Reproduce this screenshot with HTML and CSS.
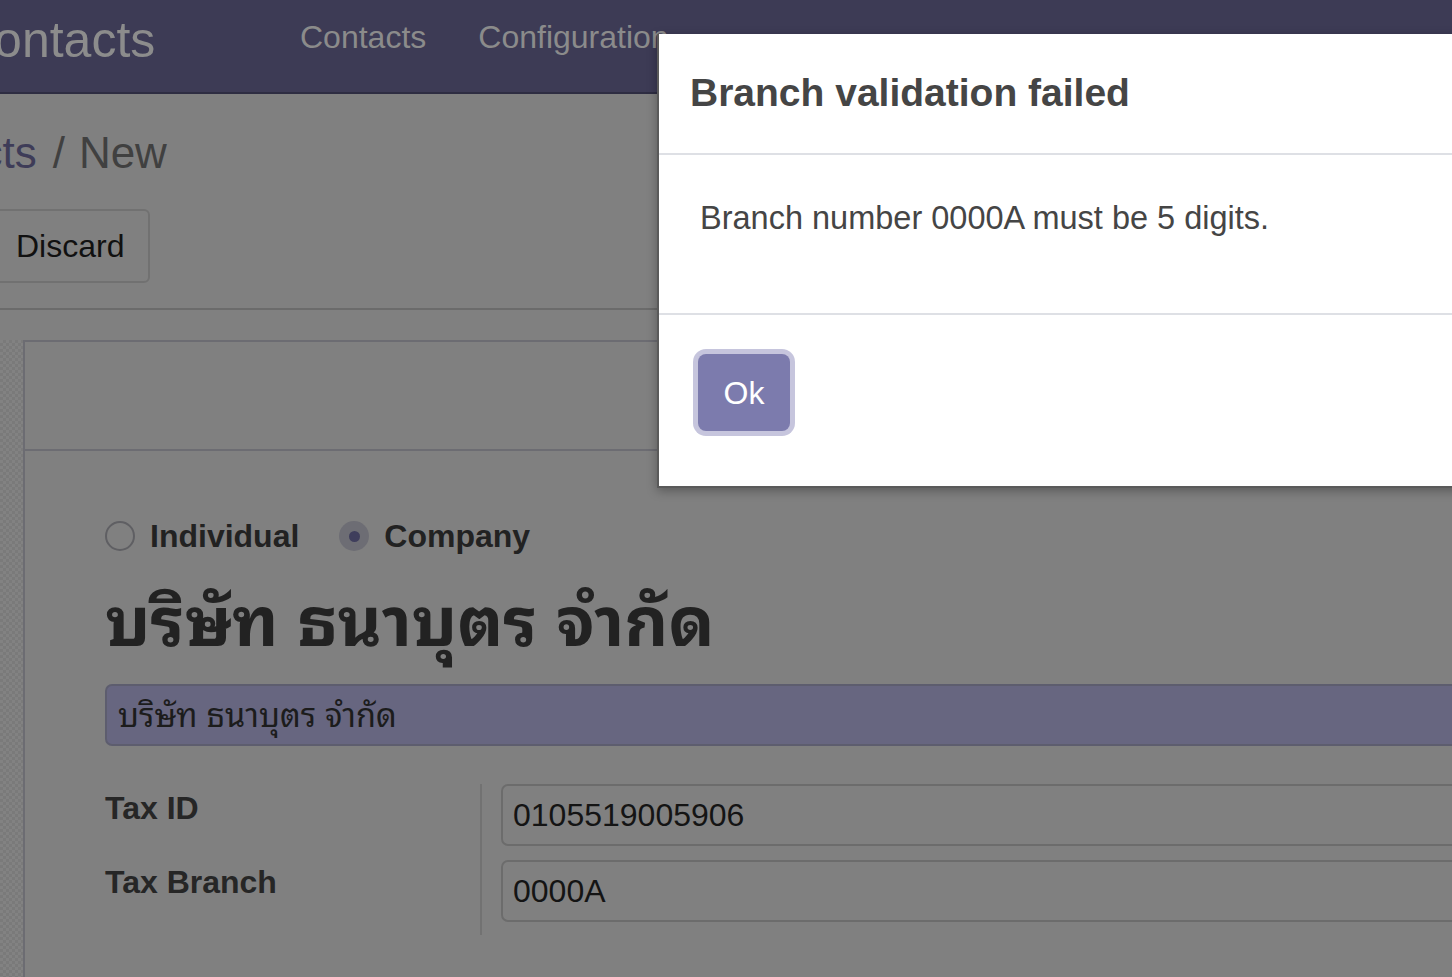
FILE: index.html
```html
<!DOCTYPE html>
<html lang="en">
<head>
<meta charset="utf-8">
<title>Contacts / New</title>
<link rel="stylesheet" href="styles.css">
</head>
<body>
<div class="app">
  <header class="navbar">
    <div class="brand">Contacts</div>
    <nav class="menu">
      <span class="menu-item">Contacts</span>
      <span class="menu-item">Configuration</span>
    </nav>
  </header>

  <div class="control-panel">
    <div class="breadcrumb"><span class="bc-link">Contacts</span><span class="bc-sep">/</span><span class="bc-active">New</span></div>
    <div class="cp-buttons">
      <button class="btn-discard">Discard</button>
    </div>
  </div>

  <div class="form-view">
    <div class="sheet-row">
      <div class="sheet-gutter"></div>
      <div class="sheet">
        <div class="statusbar"></div>
        <div class="sheet-body">
          <div class="radio-row">
            <label class="radio-option">
              <span class="radio"></span>
              <span class="radio-label">Individual</span>
            </label>
            <label class="radio-option">
              <span class="radio radio-checked"><span class="radio-dot"></span></span>
              <span class="radio-label">Company</span>
            </label>
          </div>
          <h1 class="partner-title">บริษัท ธนาบุตร จำกัด</h1>
          <div class="name-input">บริษัท ธนาบุตร จำกัด</div>
          <div class="field-grid">
            <div class="labels">
              <div class="field-label">Tax ID</div>
              <div class="field-label">Tax Branch</div>
            </div>
            <div class="values">
              <div class="field-input">0105519005906</div>
              <div class="field-input">0000A</div>
            </div>
          </div>
        </div>
      </div>
    </div>
  </div>
</div>

<div class="modal" role="dialog">
  <div class="modal-header">
    <h4 class="modal-title">Branch validation failed</h4>
  </div>
  <div class="modal-body">Branch number 0000A must be 5 digits.</div>
  <div class="modal-footer">
    <button class="btn-ok">Ok</button>
  </div>
</div>
</body>
</html>
```

FILE: styles.css
```css
* { box-sizing: border-box; }

html, body {
  margin: 0;
  padding: 0;
  width: 1452px;
  height: 977px;
  overflow: hidden;
  background: #808080;
  font-family: "Liberation Sans", Arial, "Noto Sans Thai Looped", "Noto Sans Thai", "Noto Sans", sans-serif;
}

.app {
  width: 1452px;
  height: 977px;
  overflow: hidden;
}

/* NAVBAR */
.navbar {
  height: 94px;
  background: #3d3b55;
  border-bottom: 2px solid #2e2d42;
  display: flex;
  align-items: flex-start;
}

.brand {
  margin-left: -42px;
  width: 316px;
  flex: none;
  padding-top: 15px;
  font-size: 50px;
  line-height: 1;
  color: #8c8c8c;
  white-space: nowrap;
}

.menu {
  display: flex;
  padding-top: 21px;
}

.menu-item {
  padding: 0 26px;
  font-size: 32px;
  line-height: 1;
  color: #8b8b8b;
  white-space: nowrap;
}

/* CONTROL PANEL */
.control-panel {
  padding-top: 37px;
  padding-bottom: 25px;
  border-bottom: 2px solid #6b6b6b;
}

.breadcrumb {
  margin-left: -137px;
  font-size: 44px;
  line-height: 1;
  white-space: nowrap;
}

.bc-link { color: #3e3c58; }
.bc-sep { color: #404040; padding: 0 14px 0 16px; }
.bc-active { color: #404040; }

.cp-buttons {
  margin-top: 34px;
  display: flex;
}

.btn-discard {
  margin-left: -10px;
  height: 74px;
  padding: 0 24px 0 24px;
  background: #808080;
  border: 2px solid #717171;
  border-radius: 6px;
  font-family: inherit;
  font-size: 32px;
  color: #111111;
  line-height: 1;
}

/* FORM */
.form-view {
  padding-top: 30px;
}

.sheet-row {
  display: flex;
  height: 700px;
}

.sheet-gutter {
  width: 23px;
  flex: none;
  background-color: #828282;
  background-image:
    linear-gradient(45deg, #7a7a7a 25%, transparent 25%, transparent 75%, #7a7a7a 75%),
    linear-gradient(45deg, #7a7a7a 25%, transparent 25%, transparent 75%, #7a7a7a 75%);
  background-size: 6px 6px;
  background-position: 0 0, 3px 3px;
}

.sheet {
  width: 1600px;
  flex: none;
  border-top: 2px solid #6c6c72;
  border-left: 2px solid #6c6c72;
  background: #808080;
}

.statusbar {
  height: 109px;
  border-bottom: 2px solid #6c6c72;
}

.sheet-body {
  padding: 65px 0 0 80px;
}

.radio-row {
  display: flex;
  align-items: center;
  height: 40px;
  gap: 40px;
}

.radio-option {
  display: flex;
  align-items: center;
  gap: 15px;
}

.radio {
  width: 30px;
  height: 30px;
  border-radius: 50%;
  border: 2px solid #5f5f63;
  display: flex;
  align-items: center;
  justify-content: center;
}

.radio-checked {
  border: none;
  background: #6d6d74;
}

.radio-dot {
  width: 11px;
  height: 11px;
  border-radius: 50%;
  background: #3f3e5c;
}

.radio-label {
  font-size: 32px;
  font-weight: bold;
  color: #222222;
  line-height: 1;
}

.partner-title {
  margin: 26px 0 0 0;
  height: 80px;
  font-size: 68px;
  line-height: 80px;
  font-weight: bold;
  color: #222222;
  white-space: nowrap;
}

.name-input {
  margin-top: 22px;
  height: 62px;
  padding: 0 11px 7px 11px;
  display: flex;
  align-items: center;
  background: #676680;
  border: 2px solid #5d5d6e;
  border-radius: 7px;
  font-size: 32.5px;
  color: #1c1c1c;
  white-space: nowrap;
}

.field-grid {
  margin-top: 38px;
  display: grid;
  grid-template-columns: 375px 1fr;
}

.labels {
  display: flex;
  flex-direction: column;
  gap: 14px;
}

.field-label {
  height: 62px;
  padding-top: 8px;
  font-size: 32px;
  line-height: 1;
  font-weight: bold;
  color: #262626;
}

.field-label + .field-label {
  padding-top: 6px;
}

.values {
  border-left: 2px solid #727272;
  padding: 0 0 13px 19px;
  display: flex;
  flex-direction: column;
  gap: 14px;
}

.field-input {
  height: 62px;
  padding: 0 10px;
  display: flex;
  align-items: center;
  border: 2px solid #6c6c6c;
  border-radius: 7px;
  font-size: 32px;
  color: #141414;
}

/* MODAL (lies over the page) */
.modal {
  position: absolute;
  left: 657px;
  top: 34px;
  width: 900px;
  height: 454px;
  background: #ffffff;
  border-left: 2px solid #5a5a5a;
  border-bottom: 2px solid #5a5a5a;
  box-shadow: 0 3px 10px rgba(0, 0, 0, 0.3);
}

.modal-header {
  height: 121px;
  padding: 39px 0 0 31px;
  border-bottom: 2px solid #dee0e5;
}

.modal-title {
  margin: 0;
  font-size: 39px;
  line-height: 1;
  font-weight: bold;
  color: #454545;
}

.modal-body {
  height: 160px;
  padding: 47px 0 0 41px;
  font-size: 32.5px;
  line-height: 1;
  color: #454545;
  border-bottom: 2px solid #dee0e5;
}

.modal-footer {
  padding: 39px 0 0 39px;
}

.btn-ok {
  width: 92px;
  height: 77px;
  border: none;
  border-radius: 8px;
  background: #7c7bad;
  box-shadow: 0 0 0 5px #c6c5dd;
  font-family: inherit;
  font-size: 32px;
  line-height: 1;
  color: #ffffff;
  padding: 0;
}
```
